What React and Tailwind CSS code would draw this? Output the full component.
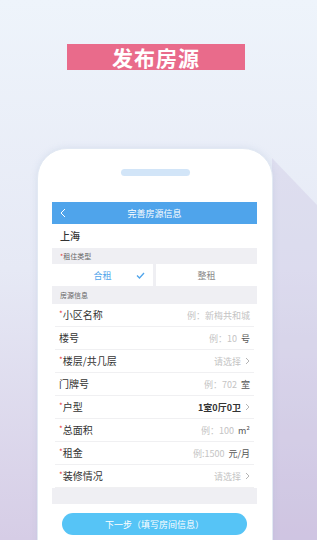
import React from 'react';

const font = { fontFamily: '"Noto Sans CJK SC", "Noto Sans", sans-serif' };

function Chevron({ className = '' }) {
  return (
    <svg width="5" height="8" viewBox="0 0 5 8" className={className}>
      <path d="M1 1l3 3-3 3" fill="none" stroke="#b5b5b5" strokeWidth="1" />
    </svg>
  );
}

function Row({ label, required, placeholder, unit, value, arrow }) {
  return (
    <div className="h-[23px] mx-[3px] px-[4px] flex items-center justify-between border-b border-[#f0f0f2]">
      <span className="text-[10px] text-[#333] leading-none">
        {required && <span className="text-[#e23a3a] text-[8px] align-top">*</span>}
        {label}
      </span>
      <span className="flex items-center gap-[4px] text-[9px] leading-none">
        {placeholder && <span className="text-[#c4c4c4]">{placeholder}</span>}
        {value && <span className="text-[#333] font-semibold">{value}</span>}
        {unit && <span className="text-[#555]">{unit}</span>}
        {arrow && <Chevron />}
      </span>
    </div>
  );
}

export default function App() {
  return (
    <div
      className="relative w-[317px] h-[540px] overflow-hidden bg-gradient-to-b from-[#eef4fb] via-[#e6e9f5] to-[#d6cde6]"
      style={font}
    >
      <svg className="absolute inset-0" width="317" height="540">
        <polygon points="272,158 317,205 317,540 272,540" fill="#b3a3d3" opacity="0.2" />
      </svg>

      <div className="relative pt-[44px] flex flex-col items-start">
        <div className="ml-[67px] w-[178px] h-[26px] bg-[#e96b8b] flex items-center justify-center">
          <span className="text-white text-[21px] font-bold tracking-[1px] leading-none">发布房源</span>
        </div>

        <div className="mt-[78px] ml-[37px] w-[236px] h-[400px] bg-white rounded-t-[30px] border border-[#e2e9f3] shadow-[0_0_6px_rgba(160,180,210,0.25)] flex flex-col items-start">
          <div className="mt-[20px] ml-[83px] w-[69px] h-[7px] rounded-full bg-[#d2e5f8]" />

          <div className="mt-[26px] ml-[14px] w-[205px] flex flex-col">
            <div className="h-[22px] bg-[#4fa4eb] relative flex items-center justify-center">
              <svg className="absolute left-[8px] top-[6px]" width="6" height="10" viewBox="0 0 6 10">
                <path d="M5 1L1 5l4 4" fill="none" stroke="#fff" strokeWidth="1" />
              </svg>
              <span className="text-white text-[9px] leading-none">完善房源信息</span>
            </div>

            <div className="h-[24px] flex items-center px-[8px]">
              <span className="text-[10px] text-[#333] font-medium leading-none">上海</span>
            </div>

            <div className="h-[16px] bg-[#efeff3] flex items-center px-[8px]">
              <span className="text-[7px] text-[#666] leading-none">
                <span className="text-[#e23a3a]">*</span>租住类型
              </span>
            </div>

            <div className="h-[23px] flex bg-[#efeff3] gap-[3px] pb-[1px]">
              <div className="flex-1 bg-white relative flex items-center justify-center">
                <span className="text-[9px] text-[#4fa4eb] leading-none">合租</span>
                <svg className="absolute right-[8px] top-[8px]" width="9" height="7" viewBox="0 0 9 7">
                  <path d="M1 3.5l2.5 2.5L8 1" fill="none" stroke="#4fa4eb" strokeWidth="1.3" />
                </svg>
              </div>
              <div className="flex-1 bg-white flex items-center justify-center">
                <span className="text-[9px] text-[#888] leading-none">整租</span>
              </div>
            </div>

            <div className="h-[17px] bg-[#efeff3] flex items-center px-[8px]">
              <span className="text-[7px] text-[#666] leading-none">房源信息</span>
            </div>

            <Row label="小区名称" required placeholder="例：新梅共和城" />
            <Row label="楼号" placeholder="例：10" unit="号" />
            <Row label="楼层/共几层" required placeholder="请选择" arrow />
            <Row label="门牌号" placeholder="例：702" unit="室" />
            <Row label="户型" required value="1室0厅0卫" arrow />
            <Row label="总面积" required placeholder="例：100" unit="m²" />
            <Row label="租金" required placeholder="例:1500" unit="元/月" />
            <Row label="装修情况" required placeholder="请选择" arrow />

            <div className="h-[16px] bg-[#efeff3]" />

            <div className="mt-[9px] px-[10px]">
              <div className="h-[22px] rounded-full bg-[#56c4f6] flex items-center justify-center">
                <span className="text-white text-[9px] leading-none">下一步（填写房间信息）</span>
              </div>
            </div>
          </div>
        </div>
      </div>
    </div>
  );
}
